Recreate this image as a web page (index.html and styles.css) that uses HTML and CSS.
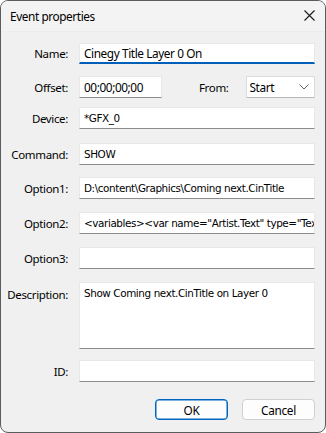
FILE: index.html
```html
<!DOCTYPE html>
<html>
<head>
<meta charset="utf-8">
<link rel="stylesheet" href="styles.css">
</head>
<body>
<div class="window">
  <div class="titlebar">
    <span class="title">Event properties</span>
    <svg class="close" width="11" height="11" viewBox="0 0 11 11"><path d="M0.5 0.5 L10.5 10.5 M10.5 0.5 L0.5 10.5" stroke="#1a1a1a" stroke-width="1.1" fill="none"/></svg>
  </div>
  <div class="content">
    <div class="row r-name">
      <label class="lbl">Name:</label>
      <div class="field focus seg">Cinegy Title Layer 0 On</div>
    </div>
    <div class="row r-offset">
      <label class="lbl">Offset:</label>
      <div class="field short seg">00;00;00;00</div>
      <label class="lbl from">From:</label>
      <div class="combo seg"><span>Start</span>
        <svg class="chev" width="10" height="6" viewBox="0 0 10 6"><path d="M0.5 0.5 L5 5 L9.5 0.5" stroke="#5f5f5f" stroke-width="1" fill="none"/></svg>
      </div>
    </div>
    <div class="row r-device">
      <label class="lbl">Device:</label>
      <div class="field tah">*GFX_0</div>
    </div>
    <div class="row r-command">
      <label class="lbl">Command:</label>
      <div class="field tah">SHOW</div>
    </div>
    <div class="row r-opt1">
      <label class="lbl">Option1:</label>
      <div class="field tah">D:\content\Graphics\Coming next.CinTitle</div>
    </div>
    <div class="row r-opt2">
      <label class="lbl">Option2:</label>
      <div class="field tah">&lt;variables&gt;&lt;var name="Artist.Text" type="Text" value="Artist"/&gt;&lt;/variables&gt;</div>
    </div>
    <div class="row r-opt3">
      <label class="lbl">Option3:</label>
      <div class="field tah"></div>
    </div>
    <div class="row r-desc">
      <label class="lbl top">Description:</label>
      <div class="field area tah">Show Coming next.CinTitle on Layer 0</div>
    </div>
    <div class="row r-id">
      <label class="lbl">ID:</label>
      <div class="field tah"></div>
    </div>
    <div class="buttons">
      <button class="btn default">OK</button>
      <button class="btn">Cancel</button>
    </div>
  </div>
</div>
</body>
</html>
```
FILE: styles.css
```css
html, body {
  margin: 0;
  padding: 0;
  background: #ffffff;
}
.window {
  box-sizing: border-box;
  width: 326px;
  height: 433px;
  border: 1px solid #5c5c5c;
  border-radius: 8px;
  background: #f0f0f0;
  overflow: hidden;
  font-family: "Noto Sans", "Open Sans", sans-serif;
  font-size: 11.5px;
  letter-spacing: -0.35px;
  color: #000;
}
.titlebar {
  height: 30px;
  background: #f3f3f3;
  display: flex;
  align-items: center;
  justify-content: space-between;
  padding: 0 10px 0 9px;
  border-bottom: 1px solid #ececec;
}
.title {
  font-size: 11.8px;
  letter-spacing: -0.4px;
  margin-top: -1px;
}
.close {
  margin-top: -1px;
}
.content {
  padding: 0 10px 0 0;
  display: flex;
  flex-direction: column;
}
.row {
  display: flex;
  align-items: center;
}
.lbl {
  width: 67px;
  flex: none;
  text-align: right;
  margin-right: 11px;
}
.lbl.top {
  align-self: flex-start;
  margin-top: 5px;
}
.lbl.from {
  width: auto;
  margin-left: 37px;
  margin-right: 17px;
}
.field {
  box-sizing: border-box;
  flex: 1;
  height: 22px;
  background: #fff;
  border: 1px solid #e8e8e8;
  border-bottom-color: #8c8c8c;
  padding: 0 4px;
  display: flex;
  align-items: center;
  white-space: nowrap;
  overflow: hidden;
}
.seg {
  font-family: "Noto Sans", "Open Sans", sans-serif;
  font-size: 11.8px;
  letter-spacing: -0.4px;
}
.tah {
  font-family: "DejaVu Sans", sans-serif;
  font-size: 10.4px;
  letter-spacing: -0.4px;
}
.field.focus {
  height: 21px;
  border-bottom: 2px solid #005fb8;
}
.field.short {
  flex: none;
  width: 83px;
}
.combo {
  box-sizing: border-box;
  flex: 1;
  height: 22px;
  background: #fff;
  border: 1px solid #dcdcdc;
  border-bottom-color: #b8b8b8;
  border-radius: 1px;
  padding: 0 5px 0 3px;
  display: flex;
  align-items: center;
  justify-content: space-between;
}
.field.area {
  height: 67px;
  align-items: flex-start;
  padding-top: 4px;
}
.r-name { margin-top: 11px; }
.r-offset { margin-top: 12px; }
.r-device { margin-top: 9px; }
.r-command { margin-top: 14px; }
.r-opt1 { margin-top: 12px; }
.r-opt2 { margin-top: 13px; }
.r-opt3 { margin-top: 13px; }
.r-desc { margin-top: 13px; }
.r-id { margin-top: 11px; }
.buttons {
  display: flex;
  justify-content: flex-end;
  gap: 14px;
  margin-top: 17px;
}
.btn {
  box-sizing: border-box;
  width: 73px;
  height: 21px;
  background: #fdfdfd;
  border: 1px solid #d0d0d0;
  border-radius: 4px;
  font-family: "Noto Sans", "Open Sans", sans-serif;
  font-size: 11.8px;
  letter-spacing: -0.3px;
  color: #000;
  padding: 0;
}
.btn.default {
  border: 1px solid #0067c0;
  box-shadow: inset 0 0 0 0.5px #0067c0;
}
```
